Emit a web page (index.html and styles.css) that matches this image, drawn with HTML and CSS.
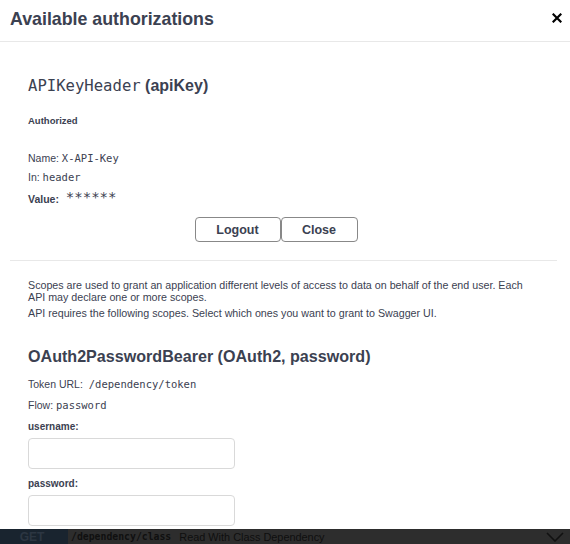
FILE: index.html
```html
<!DOCTYPE html>
<html>
<head>
<meta charset="utf-8">
<link rel="stylesheet" href="styles.css">
</head>
<body>
<div class="page">
  <div class="modal">
    <div class="modal-header">
      <h3 class="modal-title">Available authorizations</h3>
      <button class="close-x" aria-label="Close">
        <svg width="10" height="10" viewBox="0 0 10 10"><path d="M1.5 1.5 L8.5 8.5 M8.5 1.5 L1.5 8.5" stroke="#000" stroke-width="2.2" stroke-linecap="square"/></svg>
      </button>
    </div>
    <div class="modal-body">
      <div class="auth-block">
        <h4 class="scheme-title"><code class="scheme-name">APIKeyHeader</code> (apiKey)</h4>
        <h6 class="status">Authorized</h6>
        <div class="rows">
          <p class="row">Name: <code>X-API-Key</code></p>
          <p class="row">In: <code>header</code></p>
          <p class="row value"><span class="label">Value:</span> <code class="stars">******</code></p>
        </div>
        <div class="btns">
          <button class="btn">Logout</button><button class="btn">Close</button>
        </div>
      </div>
      <div class="auth-block second">
        <p class="scopes-text">Scopes are used to grant an application different levels of access to data on behalf of the end user. Each API may declare one or more scopes.</p>
        <p class="scopes-text">API requires the following scopes. Select which ones you want to grant to Swagger UI.</p>
        <h4 class="oauth-title">OAuth2PasswordBearer (OAuth2, password)</h4>
        <p class="row lg">Token URL: <code class="url">/dependency/token</code></p>
        <p class="row lg">Flow: <code>password</code></p>
        <label class="field-label">username:</label>
        <input class="field" type="text">
        <label class="field-label">password:</label>
        <input class="field" type="password">
      </div>
    </div>
  </div>
  <div class="backdrop">
    <span class="method">GET</span>
    <span class="path">/dependency/class</span>
    <span class="summary">Read With Class Dependency</span>
    <svg class="chev" width="18" height="10" viewBox="0 0 18 10"><path d="M1 1 L9 9 L17 1" fill="none" stroke="#111" stroke-width="1.6"/></svg>
  </div>
</div>
</body>
</html>
```
FILE: styles.css
```css
* { box-sizing: border-box; }
html, body { margin: 0; padding: 0; background: #fff; }
body { font-family: "Liberation Sans", Arial, sans-serif; color: #3b4151; }
code { font-family: "DejaVu Sans Mono", monospace; color: #3b4151; }

.page { width: 570px; height: 544px; display: flex; flex-direction: column; overflow: hidden; }

.modal { height: 529px; flex: none; background: #fff; display: flex; flex-direction: column; overflow: hidden; }

.modal-header { height: 42px; flex: none; display: flex; align-items: center; justify-content: space-between; padding: 0 5px 2px 10px; border-bottom: 1px solid #e8e8e8; }
.modal-title { margin: 0; font-size: 17.8px; font-weight: 700; color: #3b4151; }
.close-x { border: 0; background: none; padding: 0; width: 16px; height: 16px; display: flex; align-items: center; justify-content: center; margin-top: -4px; }

.modal-body { padding: 0 13px 0 10px; }

.auth-block { padding: 32px 18px 18px 18px; border-bottom: 1px solid #e8e8e8; }
.auth-block.second { border-bottom: 0; padding: 18px 30px 0 18px; }

.scheme-title { margin: 0; font-size: 16px; font-weight: 700; color: #3b4151; line-height: 24px; }
.scheme-name { font-weight: 400; font-size: 15.6px; }

.status { margin: 16px 0 0; font-size: 9.5px; font-weight: 700; line-height: 14px; }

.rows { margin-top: 21px; }
.row { margin: 0; font-size: 10.5px; line-height: 19px; }
.row code { font-size: 10.5px; }
.row.value { line-height: 23px; }
.row.lg { line-height: 21px; }
.url { margin-left: 3px; }
.label { font-weight: 700; }
.row .stars { font-size: 14px; position: relative; top: -1px; margin-left: 4px; color: #3b4151; }

.btns { display: flex; justify-content: center; margin-top: 6px; padding-right: 15px; }
.btn { font-family: "Liberation Sans", Arial, sans-serif; font-size: 12.5px; font-weight: 700; color: #3b4151; background: #fff; border: 1.5px solid #888; border-radius: 4px; height: 25px; padding: 0; width: 86px; }
.btn + .btn { width: 77px; }

.scopes-text { margin: 0; font-size: 10.7px; line-height: 12px; color: #3b4151; }
.scopes-text + .scopes-text { margin-top: 4px; }

.oauth-title { margin: 26px 0 7px; font-size: 16.1px; font-weight: 700; line-height: 22px; }

.field-label { display: block; font-size: 10px; font-weight: 700; margin-top: 3px; line-height: 16px; }
.field { display: block; width: 207px; height: 31px; margin: 3px 0 7px; border: 1px solid #d9d9d9; border-radius: 4px; background: #fff; }

.backdrop { flex: 1; background: #2d2d2d; display: flex; align-items: center; position: relative; font-size: 12px; overflow: hidden; }
.method { width: 68px; align-self: stretch; background: #19242f; color: #2c3642; font-weight: 700; font-size: 12px; display: flex; align-items: center; justify-content: center; padding-right: 4px; }
.path { font-family: "DejaVu Sans Mono", monospace; font-weight: 700; color: #101010; font-size: 9.8px; margin-left: 3px; }
.summary { color: #0f0f0f; margin-left: 8px; font-size: 10.9px; }
.chev { position: absolute; right: 6px; top: 3px; }
```
